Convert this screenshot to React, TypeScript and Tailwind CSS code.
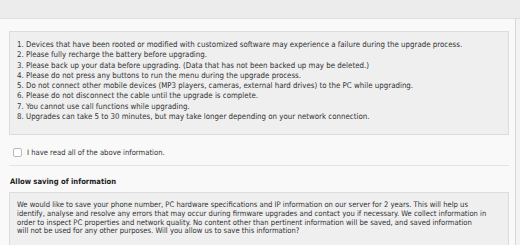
import React from 'react';

const notices = [
    '1. Devices that have been rooted or modified with customized software may experience a failure during the upgrade process.',
    '2. Please fully recharge the battery before upgrading.',
    '3. Please back up your data before upgrading. (Data that has not been backed up may be deleted.)',
    '4. Please do not press any buttons to run the menu during the upgrade process.',
    '5. Do not connect other mobile devices (MP3 players, cameras, external hard drives) to the PC while upgrading.',
    '6. Please do not disconnect the cable until the upgrade is complete.',
    '7. You cannot use call functions while upgrading.',
    '8. Upgrades can take 5 to 30 minutes, but may take longer depending on your network connection.',
];

const privacy = [
    'We would like to save your phone number, PC hardware specifications and IP information on our server for 2 years. This will help us',
    'identify, analyse and resolve any errors that may occur during firmware upgrades and contact you if necessary. We collect information in',
    'order to inspect PC properties and network quality. No content other than pertinent information will be saved, and saved information',
    'will not be used for any other purposes. Will you allow us to save this information?',
];

export default function App() {
    return (
        <div
            className="w-[520px] h-[245px] overflow-hidden bg-[#ececec] flex flex-col text-[#333] text-[7.6px]"
            style={{ fontFamily: '"DejaVu Sans Condensed", Tahoma, "Liberation Sans", sans-serif' }}
        >
            <div className="h-[19px] shrink-0 bg-[#ececec] border-b border-[#dedede]" />
            <div className="flex flex-1 min-h-0">
                <div className="w-[516px] bg-[#f9f9f9] pl-[9px] pr-[6px] pt-[12px] border-r border-[#d6d6d6]">
                    <div className="bg-[#efefef] border border-[#dcdcdc] pl-[7px] pt-[8px] pb-[12px] leading-[10.3px] text-[7.85px]">
                        {notices.map((line) => (
                            <div key={line} className="whitespace-nowrap">{line}</div>
                        ))}
                    </div>

                    <label className="flex items-center gap-[5px] pl-[4px] mt-[12px] h-[11px]">
                        <span className="w-[9px] h-[9px] rounded-[2px] border border-[#b9b9b9] bg-white" />
                        <span>I have read all of the above information.</span>
                    </label>

                    <div className="mt-[7px] border-t border-[#e3e3e3]" />

                    <div className="pl-[1px] pt-[10px] font-bold text-[#222] leading-[11px]">
                        Allow saving of information
                    </div>

                    <div className="mt-[5px] h-[80px] bg-[#efefef] border border-[#dcdcdc] pl-[7px] pt-[8px] leading-[8.7px]">
                        {privacy.map((line) => (
                            <div key={line} className="whitespace-nowrap">{line}</div>
                        ))}
                    </div>
                </div>
                <div className="flex-1 bg-[#f3f3f3]" />
            </div>
        </div>
    );
}
